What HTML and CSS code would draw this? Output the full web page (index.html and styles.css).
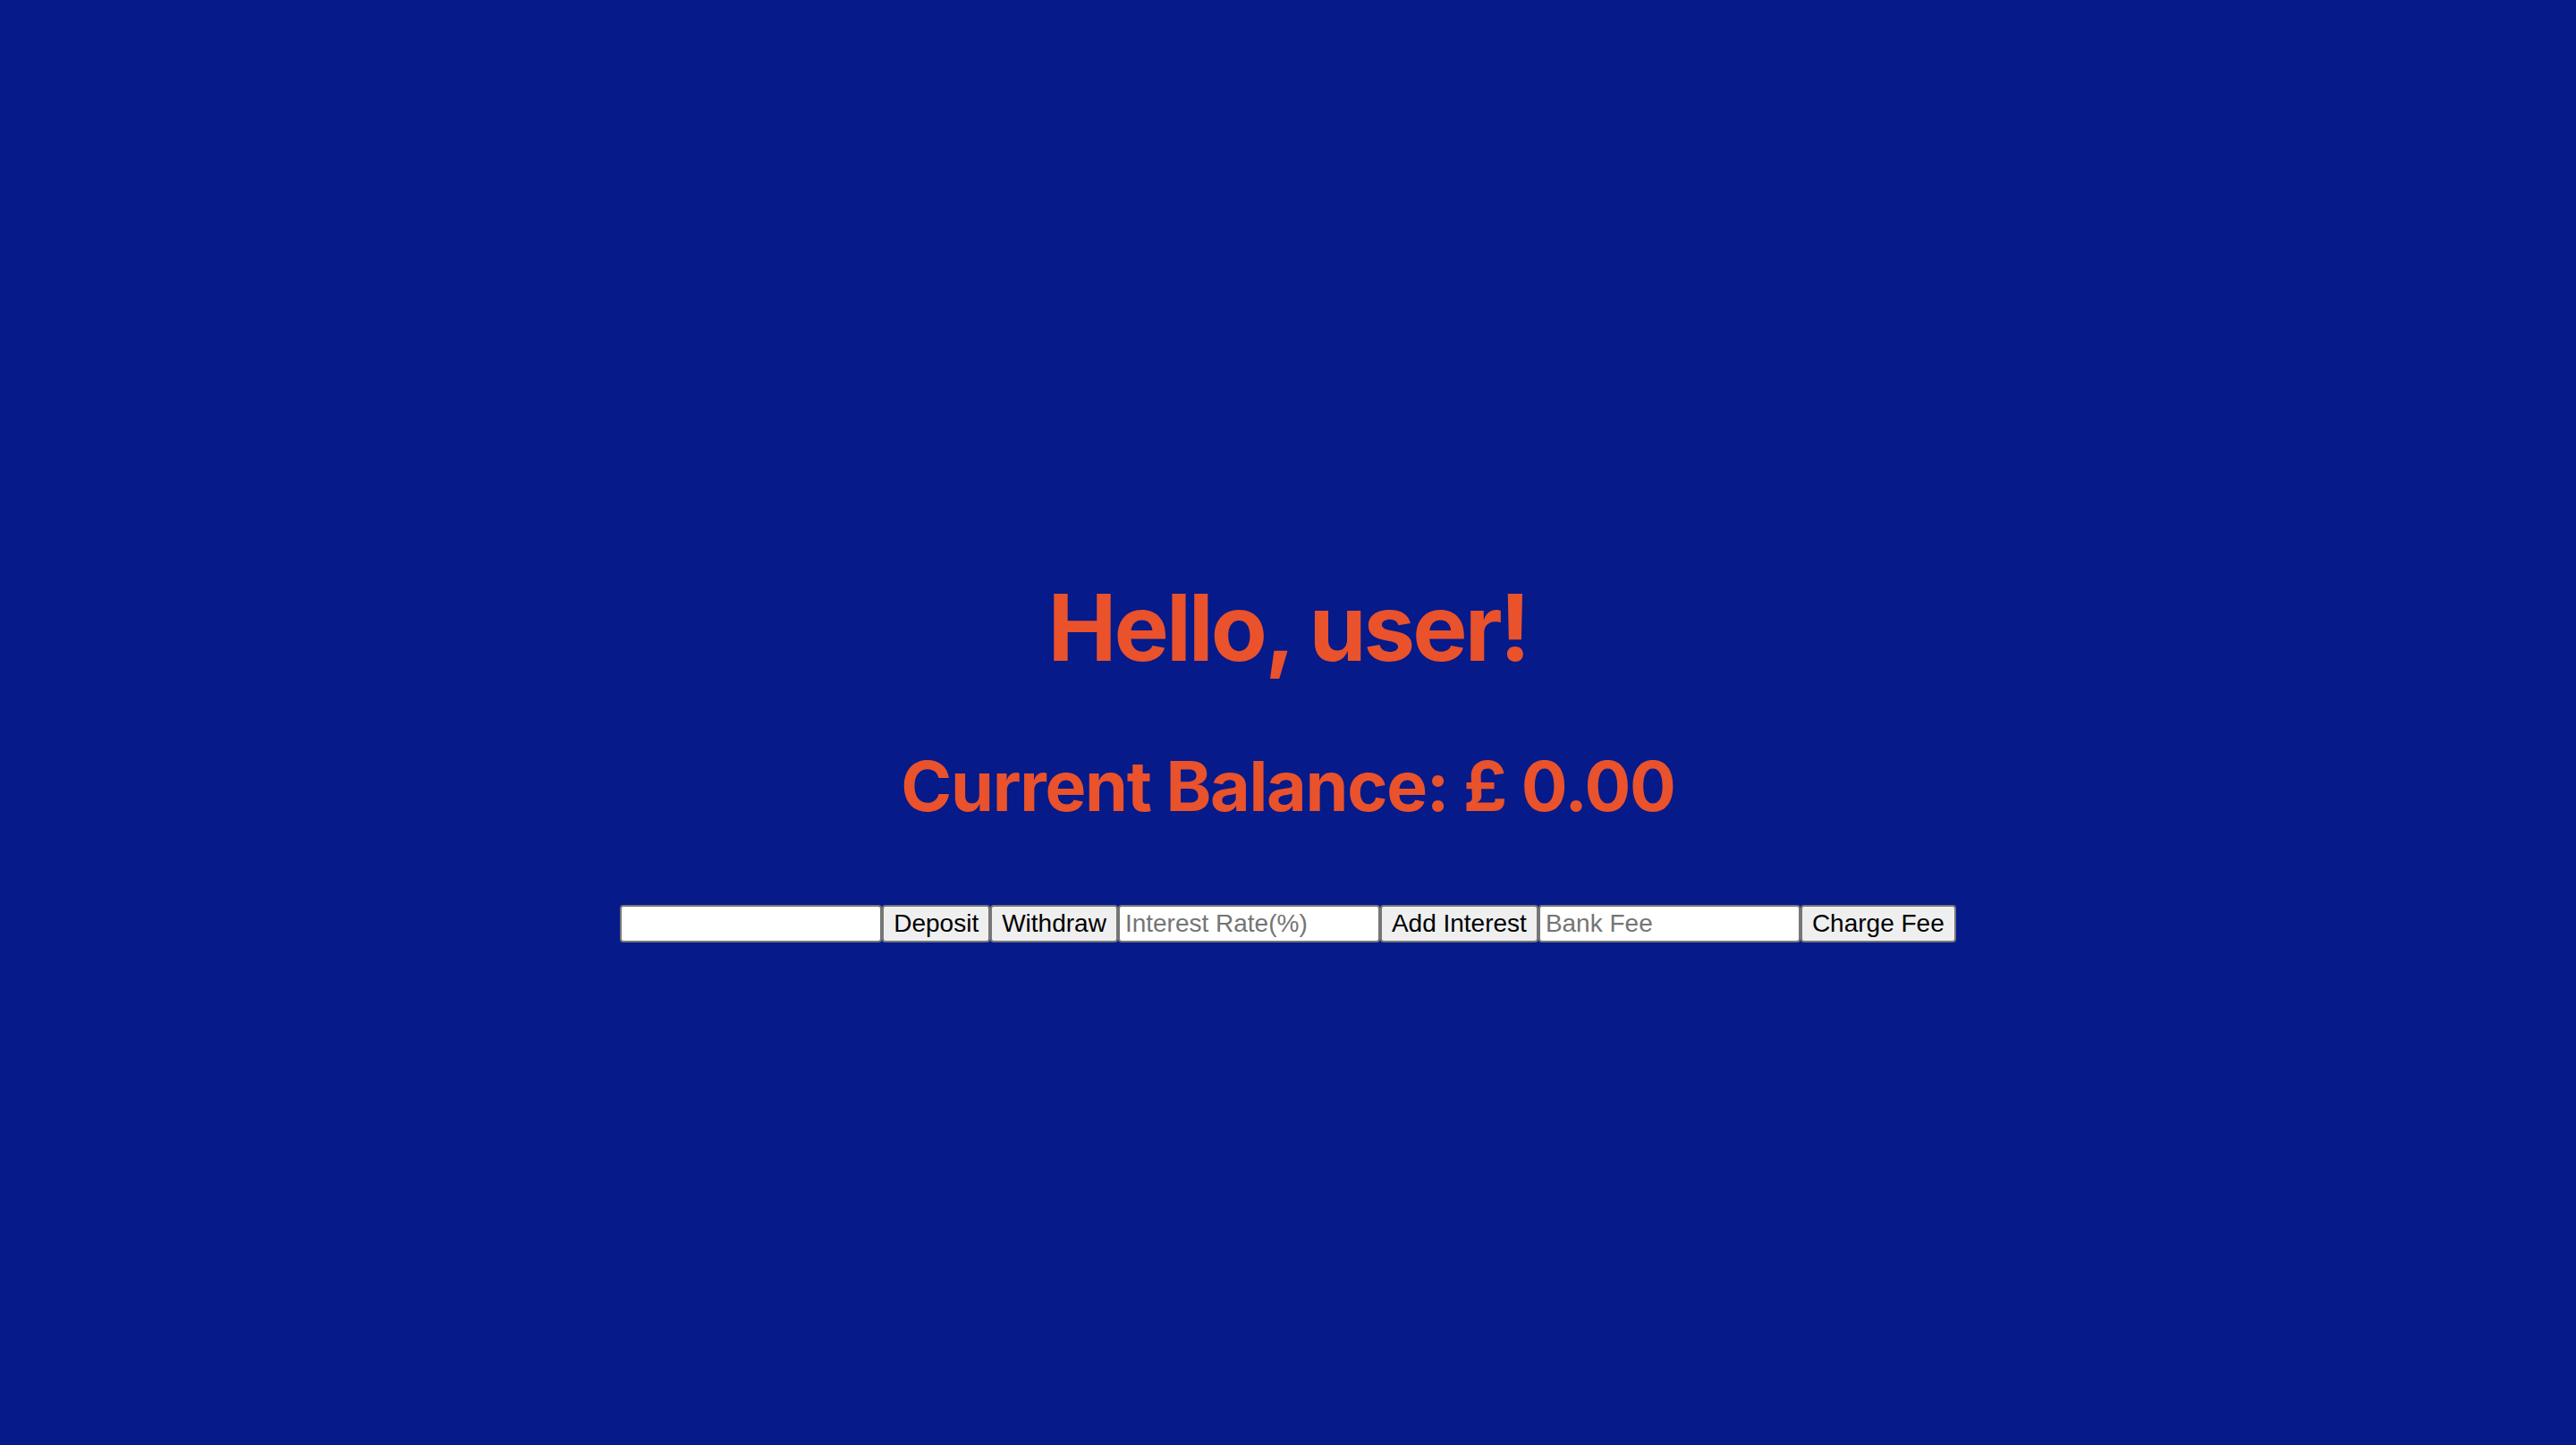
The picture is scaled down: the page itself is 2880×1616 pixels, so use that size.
FILE: index.html
```html
<!DOCTYPE html>
<html lang="en">
<head>
<meta charset="utf-8">
<title>Bank</title>
<link rel="stylesheet" href="styles.css">
</head>
<body>
<main class="page">
  <h1 class="greeting">Hello, user!</h1>
  <h2 class="balance">Current Balance: £ 0.00</h2>
  <div class="controls">
    <input class="field" type="text">
    <button class="btn">Deposit</button>
    <button class="btn">Withdraw</button>
    <input class="field" type="text" placeholder="Interest Rate(%)">
    <button class="btn">Add Interest</button>
    <input class="field" type="text" placeholder="Bank Fee">
    <button class="btn">Charge Fee</button>
  </div>
</main>
</body>
</html>
```

FILE: styles.css
```css
html, body {
  margin: 0;
  padding: 0;
  background: #061a8a;
}

.page {
  display: flex;
  flex-direction: column;
  align-items: center;
  padding-top: 640px;
  min-height: 100vh;
  box-sizing: border-box;
  font-family: Inter, "Liberation Sans", sans-serif;
}

.greeting {
  margin: 0;
  font-size: 103px;
  line-height: 1.21;
  font-weight: 700;
  letter-spacing: -3px;
  color: #e9522b;
}

.balance {
  margin: 68px 0 0;
  font-size: 77px;
  line-height: 1.21;
  font-weight: 700;
  letter-spacing: -1.3px;
  color: #e9522b;
}

.controls {
  display: flex;
  margin-top: 86px;
}

.field {
  box-sizing: border-box;
  width: 293px;
  height: 42px;
  margin: 0;
  padding: 2px 6px;
  border: 2px solid #767676;
  border-radius: 4px;
  background: #ffffff;
  font-family: "Liberation Sans", Arial, sans-serif;
  font-size: 28px;
  color: #000;
}

.field::placeholder {
  color: #757575;
}

.btn {
  box-sizing: border-box;
  height: 42px;
  margin: 0;
  padding: 0 11px;
  border: 2px solid #767676;
  border-radius: 4px;
  background: #efefef;
  font-family: "Liberation Sans", Arial, sans-serif;
  font-size: 28px;
  color: #000;
}
```
